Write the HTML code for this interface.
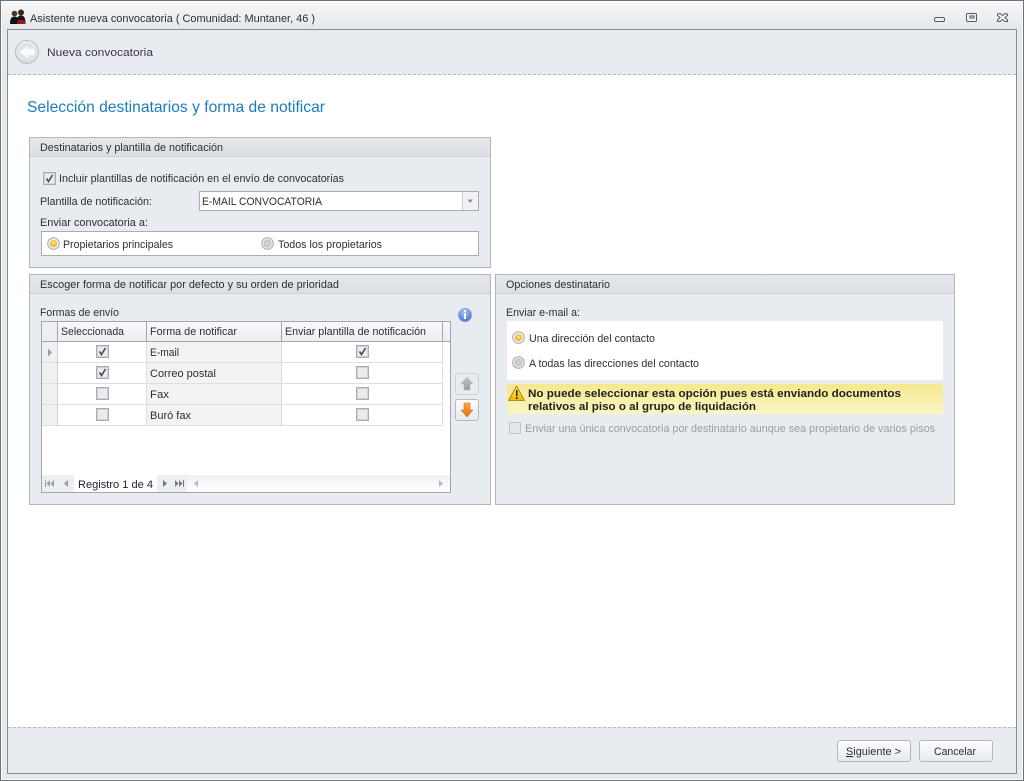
<!DOCTYPE html>
<html><head><meta charset="utf-8"><title>Asistente nueva convocatoria</title>
<style>
html,body{margin:0;padding:0;background:#fff}
svg{display:block}
text{font-family:"Liberation Sans",Arial,sans-serif;font-size:11px;fill:#2b2f33;white-space:pre}
.r{shape-rendering:crispEdges}
</style></head><body>
<svg xmlns="http://www.w3.org/2000/svg" width="1024" height="781" viewBox="0 0 1024 781">
<defs>
<linearGradient id="tb" x1="0" y1="0" x2="0" y2="1"><stop offset="0" stop-color="#f6f7f8"/><stop offset="1" stop-color="#e4e7eb"/></linearGradient>
<linearGradient id="gh" x1="0" y1="0" x2="0" y2="1"><stop offset="0" stop-color="#e5e8eb"/><stop offset="1" stop-color="#dcdfe3"/></linearGradient>
<linearGradient id="yl" x1="0" y1="0" x2="0" y2="1"><stop offset="0" stop-color="#f5e88f"/><stop offset="1" stop-color="#faf6c4"/></linearGradient>
<linearGradient id="btn" x1="0" y1="0" x2="0" y2="1"><stop offset="0" stop-color="#fdfdfe"/><stop offset="1" stop-color="#e6e9ed"/></linearGradient>
<linearGradient id="hd" x1="0" y1="0" x2="0" y2="1"><stop offset="0" stop-color="#f8f9fa"/><stop offset="1" stop-color="#eceef1"/></linearGradient>
<linearGradient id="nav" x1="0" y1="0" x2="0" y2="1"><stop offset="0" stop-color="#f0f1f3"/><stop offset="1" stop-color="#ffffff"/></linearGradient>
<radialGradient id="rsel" cx=".5" cy=".4" r=".6"><stop offset="0" stop-color="#ffe98a"/><stop offset="1" stop-color="#f2a316"/></radialGradient>
<radialGradient id="roff" cx=".5" cy=".5" r=".6"><stop offset="0" stop-color="#d6d8db"/><stop offset="1" stop-color="#b9bcc0"/></radialGradient>
<radialGradient id="info" cx=".45" cy=".3" r=".8"><stop offset="0" stop-color="#a8c4f2"/><stop offset="1" stop-color="#3c68c4"/></radialGradient>
<linearGradient id="org" x1="0" y1="0" x2="0" y2="1"><stop offset="0" stop-color="#fbb03f"/><stop offset="1" stop-color="#ea6a08"/></linearGradient>
<linearGradient id="gry" x1="0" y1="0" x2="0" y2="1"><stop offset="0" stop-color="#c4c6c8"/><stop offset="1" stop-color="#989a9c"/></linearGradient>
<linearGradient id="bk" x1="0" y1="0" x2="0" y2="1"><stop offset="0" stop-color="#eef0f2"/><stop offset="1" stop-color="#d6d9de"/></linearGradient>
<linearGradient id="tri" x1="0" y1="0" x2="0" y2="1"><stop offset="0" stop-color="#ffe76a"/><stop offset="1" stop-color="#f0b400"/></linearGradient>
</defs>

<!-- window frame -->
<rect class="r" x="0" y="0" width="1024" height="781" fill="#6a7279"/>
<rect class="r" x="1" y="1" width="1022" height="779" fill="#fff"/>
<rect class="r" x="2" y="2" width="1020" height="777" fill="#e6e9ec"/>
<rect class="r" x="2" y="2" width="1020" height="27" fill="url(#tb)"/>
<!-- inner frame -->
<rect class="r" x="7" y="29" width="1010" height="745" fill="#868b90"/>
<rect class="r" x="8" y="30" width="1008" height="743" fill="#e8ebef"/>
<rect class="r" x="8" y="75" width="1008" height="652" fill="#fff"/>
<line class="r" x1="8" y1="74.500" x2="1016" y2="74.500" stroke="#b6babf" stroke-dasharray="3 2"/>
<line class="r" x1="8" y1="727.500" x2="1016" y2="727.500" stroke="#b6babf" stroke-dasharray="3 2"/>

<!-- title icon -->
<g>
<circle cx="14.500" cy="13.500" r="2.800" fill="#4a3626"/><path d="M10 24 C10 18.500 11.500 16.500 14.500 16.500 C17.500 16.500 19 18.500 19 24Z" fill="#101114"/>
<circle cx="21" cy="12.500" r="3" fill="#3a2418"/><path d="M16.500 24 C16.500 17.500 18 15.500 21 15.500 C24 15.500 25.500 17.500 25.500 24Z" fill="#1a1214"/><path d="M18 20 L24.500 20 L25.500 24 L17 24Z" fill="#9a1518"/>
</g>
<text x="30" y="22" textLength="285" lengthAdjust="spacingAndGlyphs">Asistente nueva convocatoria ( Comunidad: Muntaner, 46 )</text>

<!-- window buttons -->
<rect x="934.500" y="17.500" width="10" height="4" rx="1.500" fill="#eef0f2" stroke="#555c63"/>
<rect x="966.500" y="13.500" width="10" height="8" rx="1" fill="#eef0f2" stroke="#555c63"/>
<rect class="r" x="970" y="16" width="4" height="2" fill="#eef0f2" stroke="#555c63" stroke-width="1"/>
<path d="M997.500 14 L1000 13.500 L1002.500 15.500 L1005 13.500 L1007.500 14 L1007.500 15.500 L1005 17.500 L1007.500 20 L1007.500 21.500 L1005 21.500 L1002.500 19.500 L1000 21.500 L997.500 21.500 L997.500 20 L1000 17.500 L997.500 15.500Z" fill="#eef0f2" stroke="#555c63"/>

<!-- back button -->
<circle cx="27" cy="52" r="11.500" fill="url(#bk)" stroke="#b8bcc2"/>
<circle cx="27" cy="52" r="9" fill="#dfe2e7"/>
<path d="M20.500 52 L27.500 46.500 L27.500 49.500 L34 49.500 L34 55 L27.500 55 L27.500 57.500Z" fill="#fbfbfc" stroke="#fbfbfc" stroke-width="1" stroke-linejoin="round"/>
<text x="47" y="56" textLength="106" lengthAdjust="spacingAndGlyphs" style="fill:#3d3344">Nueva convocatoria</text>

<!-- heading -->
<text x="27" y="112" textLength="298" lengthAdjust="spacingAndGlyphs" style="font-size:16px;fill:#1b7cc0">Selección destinatarios y forma de notificar</text>

<!-- group 1 -->
<rect class="r" x="29" y="137" width="462" height="131" fill="#b1b6bc"/>
<rect class="r" x="30" y="138" width="460" height="129" fill="#e8ebef"/>
<rect class="r" x="30" y="138" width="460" height="18" fill="url(#gh)"/>
<rect class="r" x="30" y="156" width="460" height="1" fill="#ced1d5"/>
<text x="40" y="151" textLength="183" lengthAdjust="spacingAndGlyphs">Destinatarios y plantilla de notificación</text>

<rect class="r" x="43" y="172" width="13" height="13" fill="#a8acb2"/>
<rect class="r" x="44" y="173" width="11" height="11" fill="#d0d3d6"/>
<rect class="r" x="45" y="174" width="9" height="9" fill="#ececee"/>
<path d="M46.500 178.500 L48.500 181.500 L52.500 175" fill="none" stroke="#484c52" stroke-width="1.600"/>
<text x="59" y="182" textLength="285" lengthAdjust="spacingAndGlyphs">Incluir plantillas de notificación en el envío de convocatorias</text>

<text x="40" y="205" textLength="112" lengthAdjust="spacingAndGlyphs">Plantilla de notificación:</text>
<rect class="r" x="199" y="191" width="280" height="20" fill="#a9adb3"/>
<rect class="r" x="200" y="192" width="278" height="18" fill="#fff"/>
<rect class="r" x="462" y="192" width="1" height="18" fill="#c6c9cd"/>
<rect class="r" x="463" y="192" width="15" height="18" fill="#f1f2f4"/>
<path d="M467.500 199.500 L473 199.500 L470.250 203Z" fill="#8a8f95"/>
<text x="202" y="205" textLength="120" lengthAdjust="spacingAndGlyphs">E-MAIL CONVOCATORIA</text>

<text x="40" y="226" textLength="108" lengthAdjust="spacingAndGlyphs">Enviar convocatoria a:</text>
<rect class="r" x="41" y="231" width="438" height="25" fill="#a9adb3"/>
<rect class="r" x="42" y="232" width="436" height="23" fill="#fff"/>
<circle cx="53.500" cy="243.500" r="5.800" fill="#eceef0" stroke="#a6a9ae"/>
<circle cx="53.500" cy="243.500" r="3.600" fill="url(#rsel)"/>
<text x="63" y="248" textLength="110" lengthAdjust="spacingAndGlyphs">Propietarios principales</text>
<circle cx="267.500" cy="243.500" r="5.800" fill="#eceef0" stroke="#a6a9ae"/>
<circle cx="267.500" cy="243.500" r="4" fill="url(#roff)"/>
<text x="278" y="248" textLength="104" lengthAdjust="spacingAndGlyphs">Todos los propietarios</text>

<!-- group 2 -->
<rect class="r" x="29" y="274" width="462" height="231" fill="#b1b6bc"/>
<rect class="r" x="30" y="275" width="460" height="229" fill="#e8ebef"/>
<rect class="r" x="30" y="275" width="460" height="18" fill="url(#gh)"/>
<rect class="r" x="30" y="293" width="460" height="1" fill="#ced1d5"/>
<text x="40" y="288" textLength="299" lengthAdjust="spacingAndGlyphs">Escoger forma de notificar por defecto y su orden de prioridad</text>
<text x="40" y="316" textLength="79" lengthAdjust="spacingAndGlyphs">Formas de envío</text>

<!-- grid -->
<rect class="r" x="41" y="321" width="410" height="172" fill="#a2a7ad"/>
<rect class="r" x="42" y="322" width="408" height="170" fill="#fff"/>
<rect class="r" x="42" y="322" width="408" height="19" fill="url(#hd)"/>
<rect class="r" x="42" y="341" width="408" height="1" fill="#a2a7ad"/>
<rect class="r" x="42" y="322" width="15" height="19" fill="#eceef1"/>
<rect class="r" x="42" y="342" width="15" height="84" fill="#eef0f2"/>
<rect class="r" x="57" y="322" width="1" height="20" fill="#a2a7ad"/>
<rect class="r" x="146" y="322" width="1" height="20" fill="#a2a7ad"/>
<rect class="r" x="281" y="322" width="1" height="20" fill="#a2a7ad"/>
<rect class="r" x="442" y="322" width="1" height="20" fill="#a2a7ad"/>
<text x="61" y="335" textLength="63" lengthAdjust="spacingAndGlyphs">Seleccionada</text>
<text x="150" y="335" textLength="87" lengthAdjust="spacingAndGlyphs">Forma de notificar</text>
<text x="285" y="335" textLength="141" lengthAdjust="spacingAndGlyphs">Enviar plantilla de notificación</text>

<!-- rows: Forma column shade -->
<rect class="r" x="147" y="342" width="134" height="83" fill="#f3f3f4"/>
<rect class="r" x="42" y="362" width="400" height="1" fill="#dcdfe2"/>
<rect class="r" x="42" y="383" width="400" height="1" fill="#dcdfe2"/>
<rect class="r" x="42" y="404" width="400" height="1" fill="#dcdfe2"/>
<rect class="r" x="42" y="425" width="400" height="1" fill="#dcdfe2"/>
<rect class="r" x="57" y="342" width="1" height="84" fill="#cdd0d4"/>
<rect class="r" x="146" y="342" width="1" height="84" fill="#dcdfe2"/>
<rect class="r" x="281" y="342" width="1" height="84" fill="#dcdfe2"/>
<rect class="r" x="442" y="342" width="1" height="84" fill="#dcdfe2"/>
<path d="M48 348.500 L52 352.500 L48 356.500Z" fill="#9a9ea4"/>

<text x="150" y="356" textLength="29" lengthAdjust="spacingAndGlyphs">E-mail</text>
<text x="150" y="377" textLength="66" lengthAdjust="spacingAndGlyphs">Correo postal</text>
<text x="150" y="398" textLength="19" lengthAdjust="spacingAndGlyphs">Fax</text>
<text x="150" y="419" textLength="41" lengthAdjust="spacingAndGlyphs">Buró fax</text>

<!-- grid checkboxes -->
<g>
<rect class="r" x="96" y="345" width="13" height="13" fill="#a8acb2"/><rect class="r" x="97" y="346" width="11" height="11" fill="#d0d3d6"/><rect class="r" x="98" y="347" width="9" height="9" fill="#ececee"/><path d="M99.500 351.500 L101.500 354.500 L105.500 348" fill="none" stroke="#484c52" stroke-width="1.600"/>
<rect class="r" x="96" y="366" width="13" height="13" fill="#a8acb2"/><rect class="r" x="97" y="367" width="11" height="11" fill="#d0d3d6"/><rect class="r" x="98" y="368" width="9" height="9" fill="#ececee"/><path d="M99.500 372.500 L101.500 375.500 L105.500 369" fill="none" stroke="#484c52" stroke-width="1.600"/>
<rect class="r" x="96" y="387" width="13" height="13" fill="#a8acb2"/><rect class="r" x="97" y="388" width="11" height="11" fill="#d0d3d6"/><rect class="r" x="98" y="389" width="9" height="9" fill="#ececee"/>
<rect class="r" x="96" y="408" width="13" height="13" fill="#a8acb2"/><rect class="r" x="97" y="409" width="11" height="11" fill="#d0d3d6"/><rect class="r" x="98" y="410" width="9" height="9" fill="#ececee"/>
<rect class="r" x="356" y="345" width="13" height="13" fill="#a8acb2"/><rect class="r" x="357" y="346" width="11" height="11" fill="#d0d3d6"/><rect class="r" x="358" y="347" width="9" height="9" fill="#ececee"/><path d="M359.500 351.500 L361.500 354.500 L365.500 348" fill="none" stroke="#484c52" stroke-width="1.600"/>
<rect class="r" x="356" y="366" width="13" height="13" fill="#a8acb2"/><rect class="r" x="357" y="367" width="11" height="11" fill="#d0d3d6"/><rect class="r" x="358" y="368" width="9" height="9" fill="#ececee"/>
<rect class="r" x="356" y="387" width="13" height="13" fill="#a8acb2"/><rect class="r" x="357" y="388" width="11" height="11" fill="#d0d3d6"/><rect class="r" x="358" y="389" width="9" height="9" fill="#ececee"/>
<rect class="r" x="356" y="408" width="13" height="13" fill="#a8acb2"/><rect class="r" x="357" y="409" width="11" height="11" fill="#d0d3d6"/><rect class="r" x="358" y="410" width="9" height="9" fill="#ececee"/>
</g>

<!-- navigator -->
<rect class="r" x="42" y="475" width="408" height="17" fill="url(#nav)"/>
<rect class="r" x="42" y="475" width="32" height="17" fill="#eceef1"/>
<rect class="r" x="157" y="475" width="30" height="17" fill="#eceef1"/>
<rect class="r" x="74" y="475" width="83" height="17" fill="#fff"/>
<g fill="#9a9ea4">
<rect class="r" x="45" y="480" width="1" height="7"/><path d="M50 480 L46.500 483.500 L50 487Z"/><path d="M54 480 L50.500 483.500 L54 487Z"/>
<path d="M68 480 L64 483.500 L68 487Z"/>
</g>
<g fill="#73787e">
<path d="M163 480 L167 483.500 L163 487Z"/>
<path d="M175 480 L178.500 483.500 L175 487Z"/><path d="M179 480 L182.500 483.500 L179 487Z"/><rect class="r" x="183" y="480" width="1" height="7"/>
</g>
<path d="M198 480 L194 483.500 L198 487Z" fill="#b9bcc0"/>
<path d="M439 480 L443 483.500 L439 487Z" fill="#b9bcc0"/>
<text x="78" y="488" textLength="75" lengthAdjust="spacingAndGlyphs" style="fill:#1d2024">Registro 1 de 4</text>

<!-- info -->
<circle cx="465" cy="315" r="7" fill="url(#info)" stroke="#c3d0ea" stroke-width=".8"/>
<rect class="r" x="464" y="310" width="2" height="2" fill="#fff"/>
<rect class="r" x="464" y="313" width="2" height="6" fill="#fff"/>

<!-- move buttons -->
<rect x="455.500" y="373.500" width="23" height="21" rx="2.500" fill="#e9ebee" stroke="#ced1d5"/>
<path d="M467 377 L473 384 L470 384 L470 390 L464 390 L464 384 L461 384Z" fill="url(#gry)" stroke="#b0b2b5" stroke-width=".5"/>
<rect x="455.500" y="399.500" width="23" height="21" rx="2.500" fill="url(#btn)" stroke="#b6b9bd"/>
<path d="M467 417 L473 410 L470 410 L470 403 L464 403 L464 410 L461 410Z" fill="url(#org)" stroke="#c85f0a" stroke-width=".5"/>

<!-- group 3 -->
<rect class="r" x="495" y="274" width="460" height="231" fill="#b1b6bc"/>
<rect class="r" x="496" y="275" width="458" height="229" fill="#e8ebef"/>
<rect class="r" x="496" y="275" width="458" height="18" fill="url(#gh)"/>
<rect class="r" x="496" y="293" width="458" height="1" fill="#ced1d5"/>
<text x="506" y="288" textLength="104" lengthAdjust="spacingAndGlyphs">Opciones destinatario</text>
<text x="506" y="316" textLength="74" lengthAdjust="spacingAndGlyphs">Enviar e-mail a:</text>
<rect class="r" x="507" y="321" width="436" height="59" fill="#fff"/>
<circle cx="518.500" cy="337.500" r="5.800" fill="#eceef0" stroke="#a6a9ae"/>
<circle cx="518.500" cy="337.500" r="3.600" fill="url(#rsel)"/>
<text x="529" y="342" textLength="126" lengthAdjust="spacingAndGlyphs">Una dirección del contacto</text>
<circle cx="518.500" cy="362.500" r="5.800" fill="#eceef0" stroke="#a6a9ae"/>
<circle cx="518.500" cy="362.500" r="4" fill="url(#roff)"/>
<text x="529" y="367" textLength="170" lengthAdjust="spacingAndGlyphs">A todas las direcciones del contacto</text>

<rect class="r" x="507" y="384" width="436" height="30" fill="url(#yl)"/>
<path d="M516.500 386 L524.500 400.500 L508.500 400.500Z" fill="url(#tri)" stroke="#9a7a10" stroke-width=".8" stroke-linejoin="round"/>
<rect class="r" x="516" y="390" width="1.500" height="6" fill="#2a2410"/><rect class="r" x="516" y="397" width="1.500" height="2" fill="#2a2410"/>
<text x="528" y="397" textLength="373" lengthAdjust="spacingAndGlyphs" style="font-weight:bold;fill:#24221a">No puede seleccionar esta opción pues está enviando documentos</text>
<text x="528" y="410" textLength="228" lengthAdjust="spacingAndGlyphs" style="font-weight:bold;fill:#24221a">relativos al piso o al grupo de liquidación</text>

<rect class="r" x="509" y="422" width="12" height="12" fill="#c0c3c7"/>
<rect class="r" x="510" y="423" width="10" height="10" fill="#e4e6e9"/>
<text x="525" y="432" textLength="410" lengthAdjust="spacingAndGlyphs" style="fill:#9a9da1">Enviar una única convocatoria por destinatario aunque sea propietario de varios pisos</text>

<!-- footer buttons -->
<rect x="837.500" y="740.500" width="73" height="21" rx="2.500" fill="url(#btn)" stroke="#b4b8bd"/>
<text x="846" y="755" textLength="55" lengthAdjust="spacingAndGlyphs"><tspan text-decoration="underline">S</tspan>iguiente &gt;</text>
<rect x="919.500" y="740.500" width="73" height="21" rx="2.500" fill="url(#btn)" stroke="#b4b8bd"/>
<text x="934" y="755" textLength="42" lengthAdjust="spacingAndGlyphs">Cancelar</text>
</svg>
</body></html>
